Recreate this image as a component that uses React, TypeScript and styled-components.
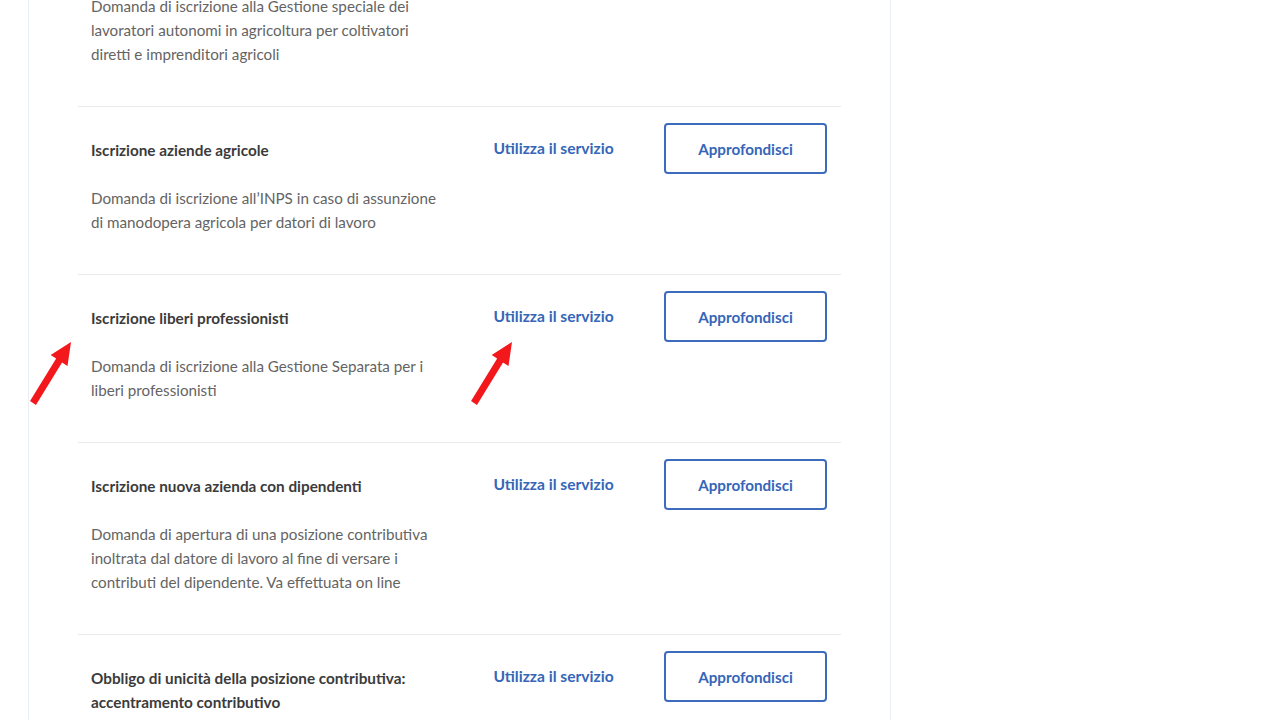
import React from "react";
import styled, { createGlobalStyle } from "styled-components";

const Global = createGlobalStyle`
  html, body { margin: 0; padding: 0; background: #ffffff; }
  body { overflow: hidden; font-family: "Lato", "Open Sans", sans-serif; }
  * { box-sizing: border-box; }
`;

const Page = styled.div`
  position: relative;
  width: 1280px;
  height: 720px;
  overflow: hidden;
  background: #ffffff;
`;

const Panel = styled.section`
  margin-left: 28px;
  width: 863px;
  min-height: 720px;
  border-left: 1px solid #e9eef2;
  border-right: 1px solid #e9eef2;
  background: #fff;
`;

const List = styled.ul`
  list-style: none;
  margin: -86px 0 0 0;
  padding: 0 49px 0 49px;
`;

const Row = styled.li`
  display: grid;
  grid-template-columns: 360px 1fr 163px;
  align-items: start;
  padding: 16px 14px 40px 13px;
  border-top: 1px solid #e8ecef;
  &:first-child { border-top: none; padding-top: 17px; }
`;

const Text = styled.div`
  display: flex;
  flex-direction: column;
`;

const Title = styled.h3`
  margin: 15px 0 0 0;
  font-size: 15.3px;
  line-height: 24px;
  font-weight: 700;
  color: #3b3b3b;
`;

const Desc = styled.p`
  margin: 24px 0 0 0;
  font-size: 15.2px;
  line-height: 24px;
  font-weight: 400;
  color: #646464;
`;

const UseLink = styled.a`
  justify-self: center;
  display: block;
  margin-right: 8px;
  line-height: 50px;
  font-size: 15.6px;
  font-weight: 700;
  color: #3566b8;
  text-decoration: none;
  white-space: nowrap;
`;

const MoreButton = styled.button`
  width: 163px;
  height: 51px;
  border: 2px solid #3d6cbc;
  border-radius: 4px;
  background: #fff;
  color: #3566b8;
  font-family: inherit;
  font-size: 15.2px;
  font-weight: 700;
  cursor: pointer;
`;

const Arrow = styled.svg<{ $x: number; $y: number }>`
  position: absolute;
  left: ${(p) => p.$x}px;
  top: ${(p) => p.$y}px;
  width: 46px;
  height: 68px;
`;

type Item = { title: string; desc: string[] };

const items: Item[] = [
  {
    title: "Iscrizione coltivatori diretti e imprenditori agricoli",
    desc: [
      "Domanda di iscrizione alla Gestione speciale dei",
      "lavoratori autonomi in agricoltura per coltivatori",
      "diretti e imprenditori agricoli",
    ],
  },
  {
    title: "Iscrizione aziende agricole",
    desc: [
      "Domanda di iscrizione all\u2019INPS in caso di assunzione",
      "di manodopera agricola per datori di lavoro",
    ],
  },
  {
    title: "Iscrizione liberi professionisti",
    desc: ["Domanda di iscrizione alla Gestione Separata per i", "liberi professionisti"],
  },
  {
    title: "Iscrizione nuova azienda con dipendenti",
    desc: [
      "Domanda di apertura di una posizione contributiva",
      "inoltrata dal datore di lavoro al fine di versare i",
      "contributi del dipendente. Va effettuata on line",
    ],
  },
  {
    title: "Obbligo di unicit\u00e0 della posizione contributiva: accentramento contributivo",
    desc: ["Domanda di accentramento contributivo"],
  },
];

const ArrowIcon = ({ x, y }: { x: number; y: number }) => (
  <Arrow $x={x} $y={y} viewBox="0 0 46 68">
    <polygon
      points="1.06,61.11 27.16,18.61 21.7,15.1 42,2 38.5,25.9 33.04,22.39 6.94,64.89"
      fill="#f2181c"
    />
  </Arrow>
);

export default function App() {
  return (
    <Page>
      <Global />
      <Panel>
        <List>
          {items.map((it) => (
            <Row key={it.title}>
              <Text>
                <Title>{it.title}</Title>
                <Desc>
                  {it.desc.map((l, i) => (
                    <React.Fragment key={i}>
                      {l}
                      {i < it.desc.length - 1 && <br />}
                    </React.Fragment>
                  ))}
                </Desc>
              </Text>
              <UseLink href="#">Utilizza il servizio</UseLink>
              <MoreButton>Approfondisci</MoreButton>
            </Row>
          ))}
        </List>
      </Panel>
      <ArrowIcon x={29} y={340} />
      <ArrowIcon x={470} y={340} />
    </Page>
  );
}
